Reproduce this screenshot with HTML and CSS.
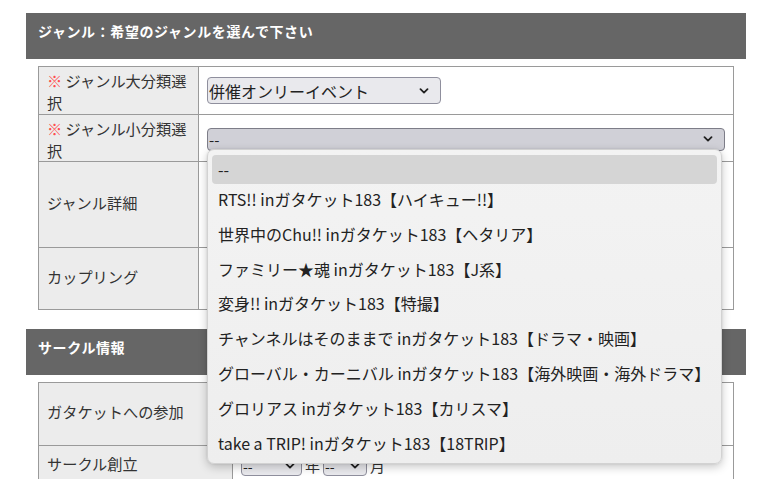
FILE: index.html
```html
<!DOCTYPE html>
<html lang="ja">
<head>
<meta charset="utf-8">
<title>ジャンル選択</title>
<link rel="stylesheet" href="styles.css">
</head>
<body>
<div class="page">
  <section class="sec">
    <h2 class="sec-title">ジャンル：希望のジャンルを選んで下さい</h2>
    <table class="form form-genre">
      <colgroup><col class="c-label"><col></colgroup>
      <tr class="r1">
        <th class="two"><span class="req">※</span> <span class="lbl">ジャンル大分類選</span><br><span class="lbl">択</span></th>
        <td><div class="sel sel-major"><span>併催オンリーイベント</span><svg class="chev" viewBox="0 0 10 6"><path d="M1.5 1.2 L5 4.6 L8.5 1.2"/></svg></div></td>
      </tr>
      <tr class="r2">
        <th class="two"><span class="req">※</span> <span class="lbl">ジャンル小分類選</span><br><span class="lbl">択</span></th>
        <td><div class="sel sel-minor"><span>--</span><svg class="chev" viewBox="0 0 10 6"><path d="M1.5 1.2 L5 4.6 L8.5 1.2"/></svg></div></td>
      </tr>
      <tr class="r3">
        <th class="one">ジャンル詳細</th>
        <td></td>
      </tr>
      <tr class="r4">
        <th class="one">カップリング</th>
        <td></td>
      </tr>
    </table>
  </section>

  <section class="sec sec-circle">
    <h2 class="sec-title">サークル情報</h2>
    <table class="form form-circle">
      <colgroup><col class="c-label2"><col></colgroup>
      <tr class="r5">
        <th class="one">ガタケットへの参加</th>
        <td></td>
      </tr>
      <tr class="r6">
        <th class="one">サークル創立</th>
        <td>
          <div class="date">
            <div class="sel sel-small sel-y"><span>--</span><svg class="chev" viewBox="0 0 10 6"><path d="M1.5 1.2 L5 4.6 L8.5 1.2"/></svg></div>
            <span class="unit">年</span>
            <div class="sel sel-small sel-m"><span>--</span><svg class="chev" viewBox="0 0 10 6"><path d="M1.5 1.2 L5 4.6 L8.5 1.2"/></svg></div>
            <span class="unit">月</span>
          </div>
        </td>
      </tr>
    </table>
  </section>

  <ul class="popup">
    <li class="opt active">--</li>
    <li class="opt">RTS!! inガタケット183【ハイキュー!!】</li>
    <li class="opt">世界中のChu!! inガタケット183【ヘタリア】</li>
    <li class="opt">ファミリー★魂 inガタケット183【J系】</li>
    <li class="opt">変身!! inガタケット183【特撮】</li>
    <li class="opt">チャンネルはそのままで inガタケット183【ドラマ・映画】</li>
    <li class="opt">グローバル・カーニバル inガタケット183【海外映画・海外ドラマ】</li>
    <li class="opt">グロリアス inガタケット183【カリスマ】</li>
    <li class="opt">take a TRIP! inガタケット183【18TRIP】</li>
  </ul>
</div>
</body>
</html>
```

FILE: styles.css
```css
* { box-sizing: border-box; }
html, body {
  margin: 0;
  padding: 0;
  background: #ffffff;
}
body {
  font-family: "Noto Sans CJK JP", "Noto Sans", sans-serif;
  color: #333333;
  overflow: hidden;
}
.page {
  position: relative;
  width: 772px;
  height: 479px;
  padding: 13px 26px 0 26px;
}
.sec {
  width: 720px;
}
.sec-circle {
  margin-top: 19px;
}
.sec-title {
  margin: 0;
  height: 46px;
  background: #666666;
  color: #ffffff;
  font-size: 14px;
  font-weight: 700;
  line-height: 37px;
  padding-left: 12px;
  letter-spacing: 0.6px;
}
.form {
  margin: 7px 0 0 12px;
  width: 696px;
  border-collapse: collapse;
  table-layout: fixed;
  font-size: 15.2px;
}
.c-label { width: 160px; }
.c-label2 { width: 194px; }
.form th,
.form td {
  border: 1px solid #9a9a9a;
  padding: 0;
  vertical-align: middle;
}
.form th {
  background: #ececec;
  font-weight: 400;
  text-align: left;
  padding: 0 8px;
  line-height: 18px;
  color: #333333;
  white-space: nowrap;
}
.form th.one {
  padding-bottom: 6px;
}
.form th.two {
  line-height: 22px;
  padding-top: 1px;
}
.form td {
  padding-left: 8px;
}
.r1 { height: 48px; }
.r2 { height: 47px; }
.r3 { height: 86px; }
.r4 { height: 62px; }
.r5 { height: 63px; }
.r6 { height: 40px; }
.req {
  color: #ff4d4d;
}
.sel {
  display: flex;
  align-items: center;
  justify-content: space-between;
  border: 1px solid #8f8f9d;
  border-radius: 4px;
  background: #e9e9ed;
  color: #222222;
  padding: 0 11px 0 1px;
  white-space: nowrap;
}
.sel-major {
  width: 234px;
  height: 27px;
  font-size: 16px;
}
.sel-minor {
  width: 518px;
  height: 23px;
  font-size: 15px;
  background: #d0d0d7;
  border-color: #7d7d88;
  margin-top: 2px;
}
.chev {
  width: 10px;
  height: 6px;
  fill: none;
  stroke: #222222;
  stroke-width: 1.8;
  stroke-linecap: round;
  stroke-linejoin: round;
}
.date {
  display: flex;
  align-items: center;
  gap: 3px;
  font-size: 15px;
  color: #333333;
}
.sel-small {
  height: 20px;
  font-size: 14px;
  padding-right: 6px;
}
.sel-y { width: 61px; }
.sel-m { width: 44px; }
.unit { line-height: 20px; }

.popup {
  position: absolute;
  left: 207px;
  top: 149px;
  width: 515px;
  height: 315px;
  margin: 0;
  padding: 5px 4px 0 4px;
  list-style: none;
  background: linear-gradient(#f3f3f3, #eeeeee);
  border: 1px solid #d2d2d2;
  border-radius: 7px;
  box-shadow: 0 3px 10px rgba(0, 0, 0, 0.22), 0 0 2px rgba(0, 0, 0, 0.12);
  font-size: 16px;
  color: #222222;
}
.opt {
  height: 34.8px;
  line-height: 33px;
  padding-left: 6px;
  white-space: nowrap;
}
.opt.active {
  height: 29px;
  line-height: 28px;
  background: #d5d5d5;
  border-radius: 4px;
  margin-bottom: -1px;
}
```
